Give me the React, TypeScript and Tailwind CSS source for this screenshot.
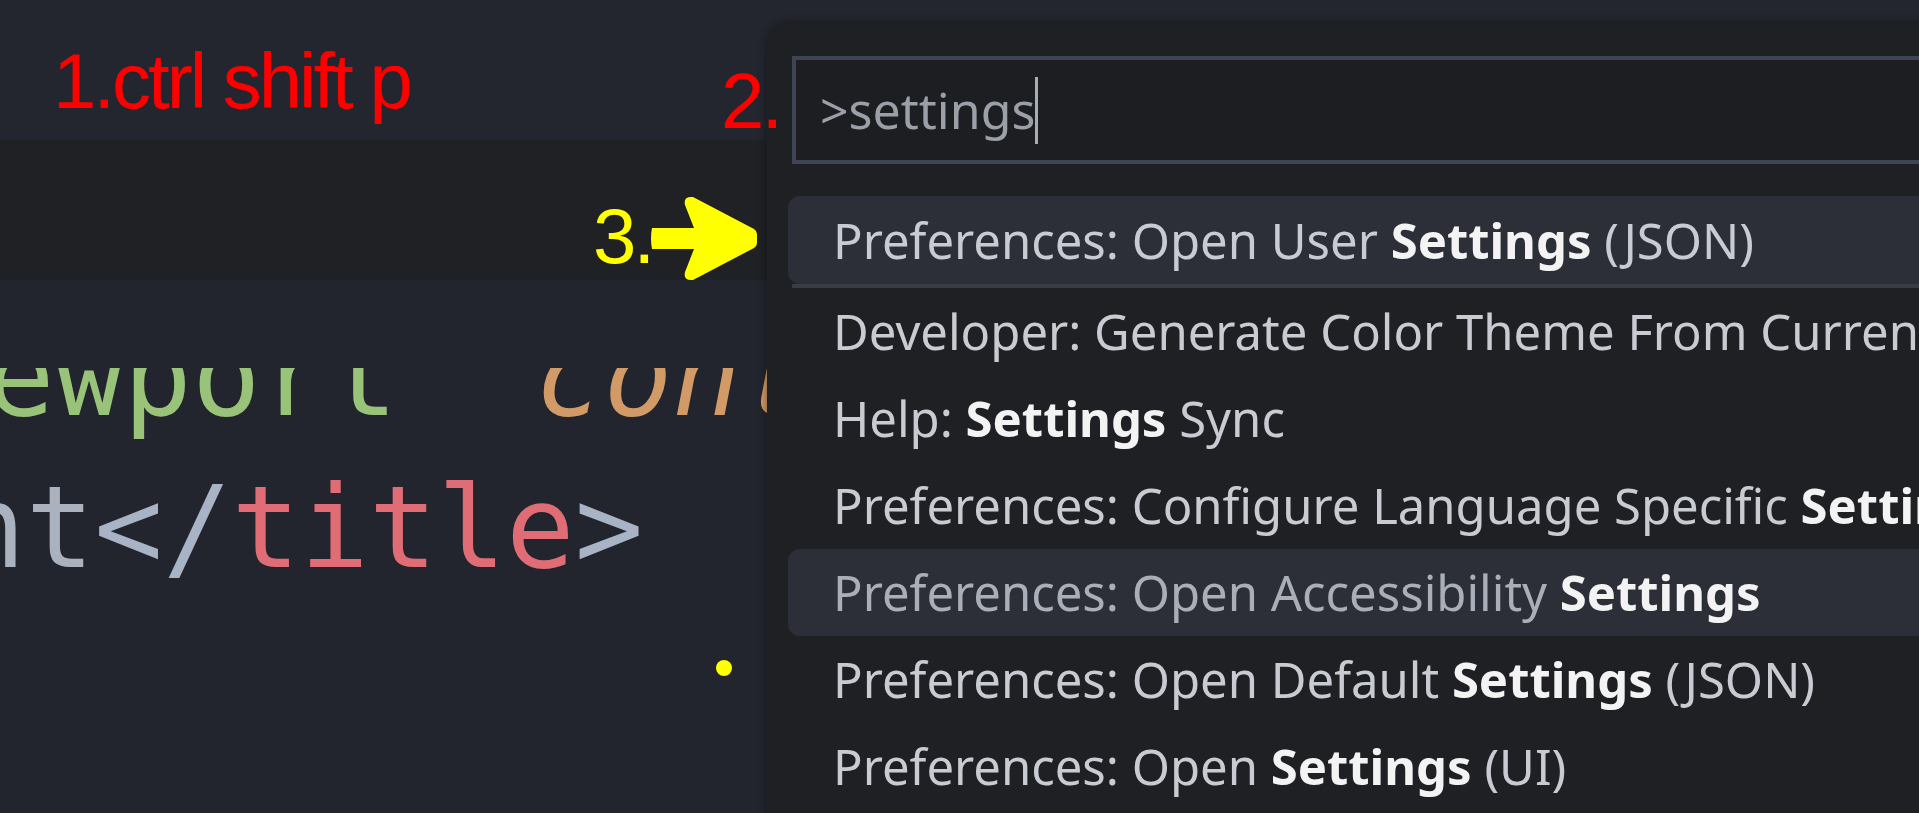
import React from "react";

type Part = { t: string; b?: boolean };
type Row = { parts: Part[]; active?: boolean; dim?: boolean; sep?: boolean };

const rows: Row[] = [
  {
    parts: [{ t: "Preferences: Open User " }, { t: "Settings", b: true }, { t: " (JSON)" }],
    active: true,
    sep: true,
  },
  { parts: [{ t: "Developer: Generate Color Theme From Current Settings" }] },
  { parts: [{ t: "Help: " }, { t: "Settings", b: true }, { t: " Sync" }] },
  {
    parts: [{ t: "Preferences: Configure Language Specific " }, { t: "Settings", b: true }, { t: "..." }],
  },
  {
    parts: [{ t: "Preferences: Open Accessibility " }, { t: "Settings", b: true }],
    active: true,
    dim: true,
  },
  { parts: [{ t: "Preferences: Open Default " }, { t: "Settings", b: true }, { t: " (JSON)" }] },
  { parts: [{ t: "Preferences: Open " }, { t: "Settings", b: true }, { t: " (UI)" }] },
];

function PaletteRow({ row }: { row: Row }) {
  return (
    <>
      <div
        className={`flex items-center whitespace-nowrap rounded-l-[12px] pl-[45px] text-[49px] ${
          row.sep ? "h-[88px] leading-[88px]" : "h-[87px] leading-[87px]"
        } ${row.active ? "bg-[#2c2f38]" : ""} ${row.dim ? "text-[#a9aeb8]" : "text-[#c8cbd1]"}`}
      >
        {row.parts.map((p, i) =>
          p.b ? (
            <span key={i} className="font-bold text-[#f3f3f3]">
              {p.t}
            </span>
          ) : (
            <span key={i} className="whitespace-pre">
              {p.t}
            </span>
          )
        )}
      </div>
      {row.sep && <div className="ml-[4px] h-[4px] bg-[#3a3c43]" />}
    </>
  );
}

export default function App() {
  return (
    <div className="relative h-[813px] w-[1919px] overflow-hidden bg-[#22252d]">
      {/* editor chrome */}
      <div className="flex h-full flex-col">
        <div className="h-[140px] bg-[#23262e]" />
        <div className="h-[140px] bg-[#1f2125]" />
        <div className="flex-1 pt-[88px]">
          <div className="h-[280px] overflow-hidden font-['DejaVu_Sans_Mono',monospace] text-[114px] leading-[152px]">
            <div className="-mt-[68px] -ml-[14px] whitespace-pre">
              <span className="text-[#98c379]">ewport"</span>
              <span> </span>
              <span className="italic text-[#d19a66]">content</span>
              <span className="text-[#abb2bf]">=</span>
            </div>
            <div className="-ml-[43px] whitespace-pre">
              <span className="text-[#abb2bf]">nt</span>
              <span className="text-[#a9b3c6]">&lt;/</span>
              <span className="text-[#e06c75]">title</span>
              <span className="text-[#a9b3c6]">&gt;</span>
            </div>
          </div>
        </div>
      </div>

      {/* command palette */}
      <div className="absolute left-[767px] top-[23px] h-[820px] w-[1200px] rounded-tl-[24px] bg-[#1f2024] pt-[33px] font-['Noto_Sans','Open_Sans',sans-serif] shadow-[0_0_10px_rgba(0,0,0,0.45)]">
        <div className="ml-[25px] flex h-[108px] items-center border-4 border-[#3e4451] bg-[#1d1e22] pl-[24px]">
          <span className="text-[50px] leading-[100px] text-[#9b9fa7]">&gt;settings</span>
          <span className="h-[67px] w-[3px] bg-[#a8acb4]" />
        </div>
        <div className="ml-[21px] mt-[32px]">
          {rows.map((r, i) => (
            <PaletteRow key={i} row={r} />
          ))}
        </div>
      </div>

      {/* annotations */}
      <div className="absolute left-[53px] top-[42px] font-['Liberation_Sans',Arial,sans-serif] text-[78px] leading-[78px] tracking-[-3px] text-[#ff0000]">
        1.ctrl shift p
      </div>
      <div className="absolute left-[721px] top-[62px] font-['Liberation_Sans',Arial,sans-serif] text-[78px] leading-[78px] tracking-[-3px] text-[#ff0000]">
        2.
      </div>
      <div className="absolute left-[593px] top-[197px] font-['Liberation_Sans',Arial,sans-serif] text-[78px] leading-[78px] tracking-[-3px] text-[#ffff00]">
        3.
      </div>
      <svg className="absolute left-[648px] top-[193px]" width="112" height="92" viewBox="0 0 112 92">
        <path
          d="M4,35 L46,35 L37,12 Q35,3 45,4 L106,36 Q109,38 109,41 L109,50 Q109,53 106,55 L45,87 Q35,88 37,79 L46,56 L4,56 Q2,45 4,35 Z"
          fill="#ffff00"
        />
      </svg>
      <div className="absolute left-[716px] top-[660px] h-[16px] w-[16px] rounded-full bg-[#ffff00]" />
    </div>
  );
}
